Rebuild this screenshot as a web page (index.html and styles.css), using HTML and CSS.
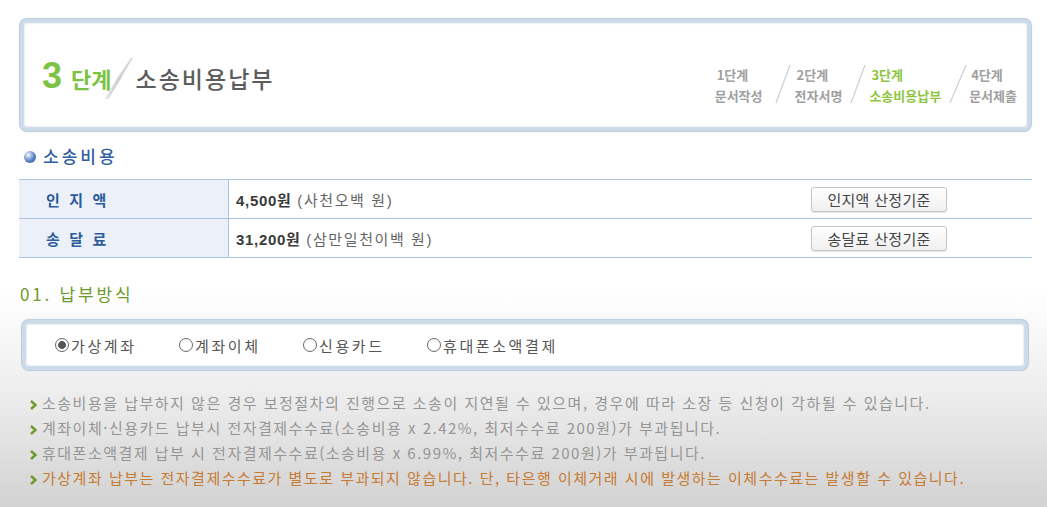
FILE: index.html
```html
<!DOCTYPE html>
<html lang="ko">
<head>
<meta charset="utf-8">
<title>소송비용납부</title>
<link rel="stylesheet" href="styles.css">
</head>
<body>
<div class="page">
  <div class="stepbox">
    <div class="title"><span class="num">3</span><span class="dan">단계</span><svg class="tslash" width="32" height="44" viewBox="0 0 32 44"><defs><linearGradient id="fold" x1="0" y1="1" x2="1" y2="0"><stop offset="0" stop-color="#f4f4f4"/><stop offset="0.5" stop-color="#d2d2d2"/><stop offset="1" stop-color="#f2f2f2"/></linearGradient></defs><polygon points="2,43 7,43 31,2 28,2" fill="url(#fold)"/><line x1="5" y1="43" x2="30" y2="2" stroke="#c8c8c8" stroke-width="0.9"/></svg><span class="tname">소송비용납부</span></div>
    <div class="steps">
      <div class="step"><span>1단계</span><span>문서작성</span></div>
      <svg class="sl" width="32" height="40" viewBox="0 0 32 40"><line x1="13" y1="39" x2="27" y2="1" stroke="#cfcfcf" stroke-width="1.2"/></svg>
      <div class="step"><span>2단계</span><span>전자서명</span></div>
      <svg class="sl" width="27" height="40" viewBox="0 0 27 40"><line x1="9" y1="39" x2="23" y2="1" stroke="#cfcfcf" stroke-width="1.2"/></svg>
      <div class="step on"><span>3단계</span><span>소송비용납부</span></div>
      <svg class="sl" width="28" height="40" viewBox="0 0 28 40"><line x1="9" y1="39" x2="25" y2="1" stroke="#cfcfcf" stroke-width="1.2"/></svg>
      <div class="step"><span>4단계</span><span>문서제출</span></div>
    </div>
  </div>

  <h2 class="sec"><span class="ball"></span>소송비용</h2>

  <div class="cost">
    <div class="row">
      <div class="th">인 지 액</div>
      <div class="td"><span><b>4,500원</b> (사천오백 원)</span><button class="btn" type="button">인지액 산정기준</button></div>
    </div>
    <div class="row">
      <div class="th">송 달 료</div>
      <div class="td"><span><b>31,200원</b> (삼만일천이백 원)</span><button class="btn" type="button">송달료 산정기준</button></div>
    </div>
  </div>

  <h3 class="sub">01. 납부방식</h3>

  <div class="radios">
    <label class="radio"><span class="dot checked"></span>가상계좌</label>
    <label class="radio"><span class="dot"></span>계좌이체</label>
    <label class="radio"><span class="dot"></span>신용카드</label>
    <label class="radio"><span class="dot"></span>휴대폰소액결제</label>
  </div>

  <ul class="notes">
    <li><svg class="arr" width="7" height="10" viewBox="0 0 7 10"><path d="M1 1 L5.5 5 L1 9" fill="none" stroke="#6d9a2a" stroke-width="2.4"/></svg>소송비용을 납부하지 않은 경우 보정절차의 진행으로 소송이 지연될 수 있으며, 경우에 따라 소장 등 신청이 각하될 수 있습니다.</li>
    <li><svg class="arr" width="7" height="10" viewBox="0 0 7 10"><path d="M1 1 L5.5 5 L1 9" fill="none" stroke="#6d9a2a" stroke-width="2.4"/></svg>계좌이체·신용카드 납부시 전자결제수수료(소송비용 x 2.42%, 최저수수료 200원)가 부과됩니다.</li>
    <li><svg class="arr" width="7" height="10" viewBox="0 0 7 10"><path d="M1 1 L5.5 5 L1 9" fill="none" stroke="#6d9a2a" stroke-width="2.4"/></svg>휴대폰소액결제 납부 시 전자결제수수료(소송비용 x 6.99%, 최저수수료 200원)가 부과됩니다.</li>
    <li class="warn"><svg class="arr" width="7" height="10" viewBox="0 0 7 10"><path d="M1 1 L5.5 5 L1 9" fill="none" stroke="#6d9a2a" stroke-width="2.4"/></svg>가상계좌 납부는 전자결제수수료가 별도로 부과되지 않습니다. 단, 타은행 이체거래 시에 발생하는 이체수수료는 발생할 수 있습니다.</li>
  </ul>
</div>
</body>
</html>
```

FILE: styles.css
```css
html {
  height: 100%;
  background: linear-gradient(to bottom, #ffffff 0, #ffffff 290px, #eeeeee 390px, #d2d2d2 507px) no-repeat;
  background-color: #d2d2d2;
}
body {
  margin: 0;
  font-family: "Liberation Sans", "Noto Sans CJK KR", sans-serif;
  color: #555;
}
.page {
  padding: 19px 15px 0 19px;
}

/* step header box */
.stepbox {
  margin: 0 1px;
  height: 112px;
  box-sizing: border-box;
  border: 3px solid #cddbe9;
  border-radius: 7px;
  box-shadow: 0 0 1px 1px #b6cadd, inset 0 0 2px 1px #c0d1e2;
  background: #fff;
  display: flex;
  justify-content: space-between;
  align-items: flex-start;
  padding: 0 11px 0 19px;
}
.title {
  margin-top: 34px;
  line-height: 40px;
  height: 40px;
  white-space: nowrap;
}
.num {
  font-family: "Liberation Sans", sans-serif;
  font-weight: bold;
  font-size: 36px;
  color: #7cc243;
  vertical-align: baseline;
}
.dan {
  font-family: "Noto Sans CJK KR", sans-serif;
  font-weight: bold;
  font-size: 22px;
  color: #7cc243;
  margin-left: 9px;
  vertical-align: baseline;
}
.tslash {
  vertical-align: -12px;
  margin-left: -10px;
}
.tname {
  font-family: "Noto Sans CJK KR", sans-serif;
  font-weight: 500;
  font-size: 23px;
  letter-spacing: 2px;
  color: #5c5c5c;
  margin-left: 2px;
  vertical-align: baseline;
}
.steps {
  display: flex;
  align-items: flex-start;
  margin-top: 42px;
}
.step {
  display: flex;
  flex-direction: column;
  font-family: "Noto Sans CJK KR", sans-serif;
  font-weight: bold;
  font-size: 13px;
  line-height: 21px;
  color: #a0a0a0;
  letter-spacing: 0;
}
.step span:first-child {
  padding-left: 2px;
}
.step.on {
  color: #8cc63f;
}
.sl {
  display: block;
}

/* section heading */
.sec {
  margin: 13px 0 11px;
  font-family: "Noto Sans CJK KR", sans-serif;
  font-weight: 500;
  font-size: 17px;
  line-height: 24px;
  letter-spacing: 3px;
  color: #2f5f9f;
  display: flex;
  align-items: center;
}
.ball {
  width: 12px;
  height: 12px;
  border-radius: 50%;
  margin: 1px 7px 0 5px;
  background: radial-gradient(circle at 35% 32%, #ffffff 0, #b4c9ea 22%, #5a82c4 55%, #24489a 100%);
}

/* cost table */
.cost {
  border-top: 1px solid #a9c5e2;
}
.row {
  display: grid;
  grid-template-columns: 210px 1fr;
  height: 39px;
  box-sizing: border-box;
  border-bottom: 1px solid #a9c5e2;
}
.th {
  background: #ecf1f9;
  border-right: 1px solid #a9c5e2;
  padding-left: 27px;
  display: flex;
  align-items: center;
  font-family: "Noto Sans CJK KR", sans-serif;
  font-weight: bold;
  font-size: 15px;
  letter-spacing: 2.6px;
  color: #2d5b9c;
}
.td {
  display: flex;
  align-items: center;
  justify-content: space-between;
  padding: 0 85px 0 7px;
  font-size: 15px;
  letter-spacing: 1.6px;
  color: #666;
}
.td b {
  color: #3a3a3a;
  letter-spacing: 0.7px;
}
.btn {
  width: 136px;
  height: 25px;
  border: 1px solid #c4c4c4;
  border-radius: 3px;
  background: linear-gradient(to bottom, #ffffff, #efefef);
  box-shadow: 0 1px 1px #e3e3e3;
  font-family: "Noto Sans CJK KR", sans-serif;
  font-size: 15px;
  line-height: 21px;
  color: #444;
  padding: 0;
  letter-spacing: 0.3px;
}

/* payment method */
.sub {
  margin: 24px 0 14px 1px;
  font-family: "Noto Sans CJK KR", sans-serif;
  font-weight: normal;
  font-size: 17px;
  line-height: 24px;
  letter-spacing: 2.8px;
  color: #6d9a2c;
}
.radios {
  margin: 0 4px 0 3px;
  height: 50px;
  box-sizing: border-box;
  border: 3px solid #cddbe9;
  border-radius: 7px;
  box-shadow: 0 0 1px 1px #b6cadd, inset 0 0 2px 1px #c0d1e2;
  background: #fff;
  display: flex;
  align-items: center;
  padding-left: 30px;
}
.radio {
  min-width: 124px;
  display: flex;
  align-items: center;
  font-family: "Noto Sans CJK KR", sans-serif;
  font-size: 15px;
  letter-spacing: 2.6px;
  color: #555;
}
.dot {
  width: 12px;
  height: 12px;
  border: 1px solid #666;
  border-radius: 50%;
  margin-right: 2px;
  box-sizing: content-box;
  background: #fff;
}
.dot.checked {
  background: radial-gradient(circle, #555 0, #555 3.5px, #fff 4.3px);
}

/* notes */
.notes {
  list-style: none;
  margin: 20px 0 0;
  padding: 0 0 0 11px;
  font-family: "Noto Sans CJK KR", sans-serif;
  font-size: 15px;
  line-height: 25px;
  letter-spacing: 1.5px;
  color: #959595;
}
.notes li {
  white-space: nowrap;
}
.arr {
  margin-right: 5px;
  vertical-align: -1px;
}
.notes li.warn {
  color: #c67b34;
}
```
